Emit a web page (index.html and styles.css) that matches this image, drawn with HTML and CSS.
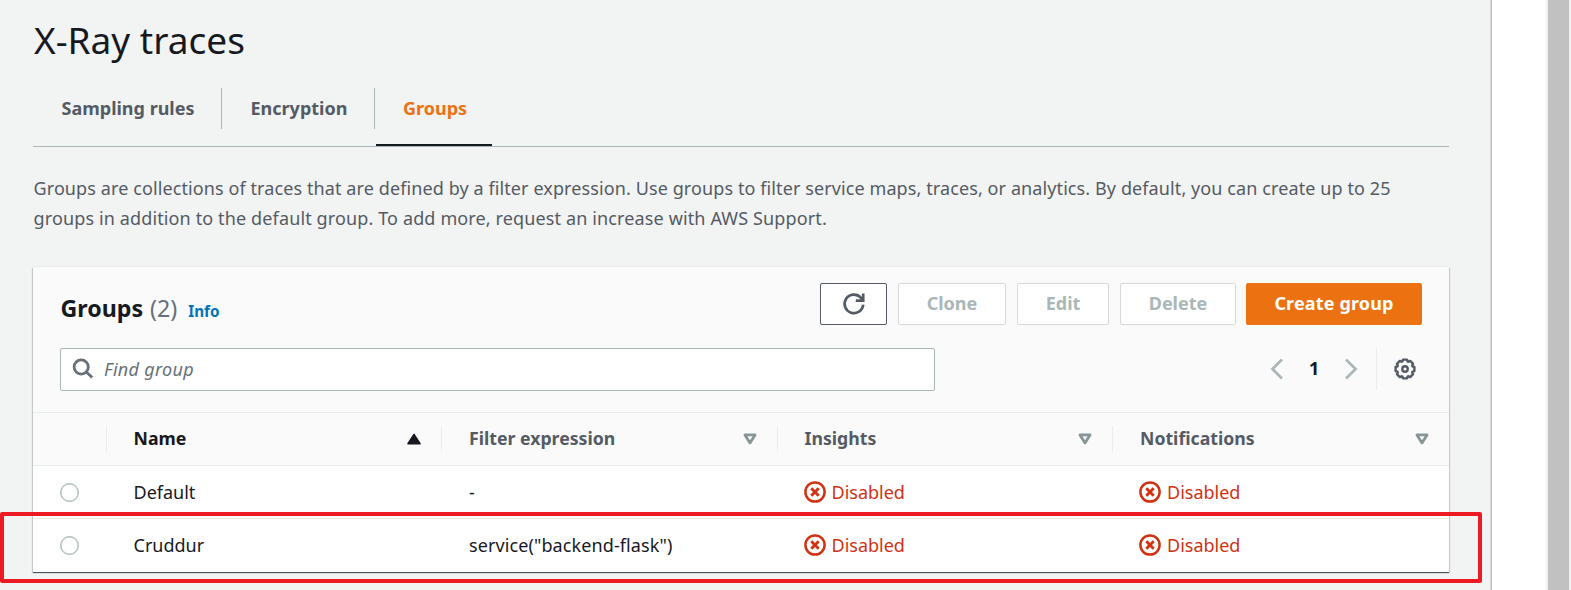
FILE: index.html
```html
<!DOCTYPE html>
<html lang="en">
<head>
<meta charset="utf-8">
<title>X-Ray traces</title>
<link rel="stylesheet" href="styles.css">
</head>
<body>
<svg class="defs" width="0" height="0" aria-hidden="true">
  <symbol id="sort" viewBox="0 0 16 14"><path d="M3 2.900h10L8 10.900z" fill="none" stroke="#879596" stroke-width="2.800" stroke-linejoin="round"/></symbol>
  <symbol id="disabled" viewBox="0 0 22 22"><circle cx="11" cy="11" r="9.600" fill="none" stroke="currentColor" stroke-width="2.500"/><path d="M7.300 7.300l7.400 7.400M14.700 7.300l-7.400 7.400" stroke="currentColor" stroke-width="2.900"/></symbol>
</svg>
<div class="app">
  <main class="content">
    <h1 class="title"><span>X-Ray traces</span></h1>
    <nav class="tabs">
      <a class="tab tab-sampling"><span>Sampling rules</span></a>
      <a class="tab tab-encryption"><span>Encryption</span></a>
      <a class="tab tab-groups"><span>Groups</span></a>
    </nav>
    <p class="description"><span class="line1">Groups are collections of traces that are defined by a filter expression. Use groups to filter service maps, traces, or analytics. By default, you can create up to 25</span><br><span class="line2">groups in addition to the default group. To add more, request an increase with AWS Support.</span></p>
    <section class="card">
      <header class="card-head">
        <div class="head-row">
          <h2 class="heading"><span>Groups</span><span class="count">(2)</span><a class="info">Info</a></h2>
          <div class="actions">
            <button class="btn refresh" aria-label="Refresh"><svg width="24" height="24" viewBox="0 0 24 24" fill="none" stroke="#545b64" stroke-width="2.700"><path d="M21.200 12.600A9.300 9.300 0 1 1 18.800 5.600L20.600 8"/><path d="M21.200 1.400v7.300h-7.400"/></svg></button>
            <button class="btn off clone"><span>Clone</span></button>
            <button class="btn off edit"><span>Edit</span></button>
            <button class="btn off delete"><span>Delete</span></button>
            <button class="btn primary"><span>Create group</span></button>
          </div>
        </div>
        <div class="filter-row">
          <div class="search">
            <svg width="22" height="22" viewBox="0 0 22 22" fill="none" stroke="#687078" stroke-width="2.800"><circle cx="9.200" cy="9" r="7.100"/><path d="M14.300 14l5.900 5.600"/></svg>
            <span>Find group</span>
          </div>
          <div class="pager">
            <svg width="14" height="22" viewBox="0 0 14 22" fill="none" stroke="#aab7b8" stroke-width="2.700"><path d="M12 1.500L2.400 11 12 20.500"/></svg>
            <b class="page">1</b>
            <svg width="14" height="22" viewBox="0 0 14 22" fill="none" stroke="#aab7b8" stroke-width="2.700"><path d="M2 1.500L11.600 11 2 20.500"/></svg>
            <span class="pager-line"></span>
            <svg class="gear" width="22" height="22" viewBox="0 0 22 22" fill="none" stroke="#545b64" stroke-width="2.400" stroke-linejoin="round"><path d="M18.500 8.300L20.400 9V13L18.500 13.700 18.200 14.400 19.100 16.200 16.200 19.100 14.400 18.200 13.700 18.500 13 20.400H9L8.300 18.500 7.600 18.200 5.800 19.100 2.900 16.200 3.800 14.400 3.500 13.700 1.600 13V9L3.500 8.300 3.800 7.600 2.900 5.800 5.800 2.900 7.600 3.800 8.300 3.500 9 1.600H13L13.700 3.500 14.400 3.800 16.200 2.900 19.100 5.800 18.200 7.600z"/><circle cx="11" cy="11" r="2.700"/></svg>
          </div>
        </div>
      </header>
      <div class="row thead">
        <div class="cell pick"></div>
        <div class="cell sorted"><span>Name</span><svg width="16" height="14" viewBox="0 0 16 14"><path d="M8 2.500L14 11.800H2z" fill="#16191f" stroke="#16191f" stroke-width="1.600" stroke-linejoin="round"/></svg></div>
        <div class="cell"><span>Filter expression</span><svg width="16" height="14"><use href="#sort"/></svg></div>
        <div class="cell"><span>Insights</span><svg width="16" height="14"><use href="#sort"/></svg></div>
        <div class="cell"><span>Notifications</span><svg width="16" height="14"><use href="#sort"/></svg></div>
      </div>
      <div class="row">
        <div class="cell pick"><i class="radio"></i></div>
        <div class="cell"><span>Default</span></div>
        <div class="cell"><span>-</span></div>
        <div class="cell status"><svg width="22" height="22"><use href="#disabled"/></svg><span>Disabled</span></div>
        <div class="cell status"><svg width="22" height="22"><use href="#disabled"/></svg><span>Disabled</span></div>
      </div>
      <div class="row">
        <div class="cell pick"><i class="radio"></i></div>
        <div class="cell"><span>Cruddur</span></div>
        <div class="cell"><span class="expression">service("backend-flask")</span></div>
        <div class="cell status"><svg width="22" height="22"><use href="#disabled"/></svg><span>Disabled</span></div>
        <div class="cell status"><svg width="22" height="22"><use href="#disabled"/></svg><span>Disabled</span></div>
      </div>
    </section>
  </main>
  <aside class="side"></aside>
  <div class="scrollbar"></div>
  <div class="highlight"></div>
</div>
</body>
</html>
```
FILE: styles.css
```css
* { box-sizing: border-box; }
body { margin: 0; background: #f2f3f3; color: #16191f; font: 18px/30px "Noto Sans", "Open Sans", sans-serif; overflow: hidden; }
.defs { display: block; height: 0; }
span, b { white-space: nowrap; }
svg { display: block; flex: none; }
.app { position: relative; display: flex; height: 590px; }
.content { flex: none; width: 1491px; padding: 0 42px 0 33px; }
.side { width: 55px; background: #fff; border-left: 1px solid #b9c3c6; box-shadow: -1px 0 1px rgba(0,28,36,.12); }
.scrollbar { width: 25px; background: #c1c1c1; border: solid #f1f1f1; border-width: 0 2px; }

.title { margin: 0; padding: 16px 0 0 1px; height: 88px; font-size: 37px; line-height: 48px; font-weight: 400; }
.tabs { display: flex; height: 59px; border-bottom: 1px solid #aab7b8; color: #545b64; font-weight: 700; }
.tab { display: flex; align-items: center; height: 41px; padding: 0 0 2px 28.500px; border-right: 1px solid #aab7b8; }
.tab-sampling { width: 189px; }
.tab-encryption { width: 153px; }
.tab-groups { width: 116px; height: 58px; margin-left: 1px; padding: 0 0 17px 27px; border-right: 0; border-bottom: 2px solid #16191f; color: #ec7211; }
.description { margin: 26px 0 0; padding-left: .5px; height: 94px; color: #545b64; }
.line1 { letter-spacing: .1px; }
.line2 { letter-spacing: .13px; }

.card { height: 305px; background: #fff; box-shadow: 0 1px 1px rgba(0,28,36,.3), 1px 1px 1px rgba(0,28,36,.15), -1px 1px 1px rgba(0,28,36,.15), 0 1px 0 #8b979a, 0 -1px 0 #eaeded; }
.card-head { height: 145px; padding: 16px 27px 0; background: #fafafa; }
.head-row { display: flex; justify-content: space-between; height: 42px; }
.heading { display: flex; align-items: baseline; margin: 0; padding: 8px 0 0 .5px; font-size: 23.200px; line-height: 35px; }
.count { margin-left: 7px; color: #687078; font-weight: 400; }
.info { margin-left: 11px; color: #0073bb; font-size: 15.200px; font-weight: 700; }
.actions { display: flex; gap: 11px; }
.btn { display: flex; align-items: center; justify-content: center; height: 42px; padding: 0 0 2px; font: 700 18px/24px "Noto Sans", sans-serif; background: #fff; border: 1px solid #545b64; border-radius: 2px; color: #545b64; }
.off { color: #aab7b8; border-color: #d5dbdb; }
.refresh { width: 67px; padding: 0; }
.clone { width: 108px; }
.edit { width: 92px; }
.delete { width: 116px; }
.primary { width: 176px; margin-left: -1px; color: #fff; background: #ec7211; border-color: #ec7211; letter-spacing: .15px; }
.filter-row { display: flex; justify-content: space-between; margin-top: 23px; }
.search { display: flex; align-items: center; width: 875px; height: 43px; padding: 0 0 1px 10.500px; background: #fff; border: 1px solid #aab7b8; border-radius: 2px; color: #687078; font-style: italic; }
.search span { margin-left: 10.500px; letter-spacing: .3px; }
.pager { display: flex; align-items: center; height: 42px; }
.page { margin: 0 25px 2px; width: 10px; text-align: center; }
.pager-line { width: 1px; height: 42px; margin: 0 17px 0 18px; background: #eaeded; }
.gear { margin-right: 6px; }

.row { display: grid; grid-template-columns: 72.500px 335.500px 335.500px 335.500px 337px; height: 53px; border-top: 1px solid #eaeded; }
.cell { display: flex; align-items: center; padding-left: 28px; }
.thead { background: #fafafa; color: #545b64; font-size: 17.700px; font-weight: 700; }
.thead .cell { justify-content: space-between; height: 26px; margin-top: 13px; padding: 0 19px 0 27px; border-left: 1px solid #eaeded; }
.thead .cell span { margin-top: -2px; }
.thead .pick { border: 0; }
.thead .sorted { color: #16191f; }
.radio { width: 19px; height: 19px; background: #fff; border: 1px solid #aab7b8; border-radius: 50%; box-shadow: inset 0 0 0 .5px #aab7b8; }
.row .pick { padding-left: 27px; }
.expression { letter-spacing: .1px; }
.row .status { padding-left: 27px; color: #d13212; }
.status span { margin-left: 6px; }

/* Annotation frame drawn over the Cruddur row */
.highlight { position: absolute; left: 0; top: 512px; width: 1482px; height: 71px; border: 4px solid #ed1c24; border-radius: 2px; }
```
